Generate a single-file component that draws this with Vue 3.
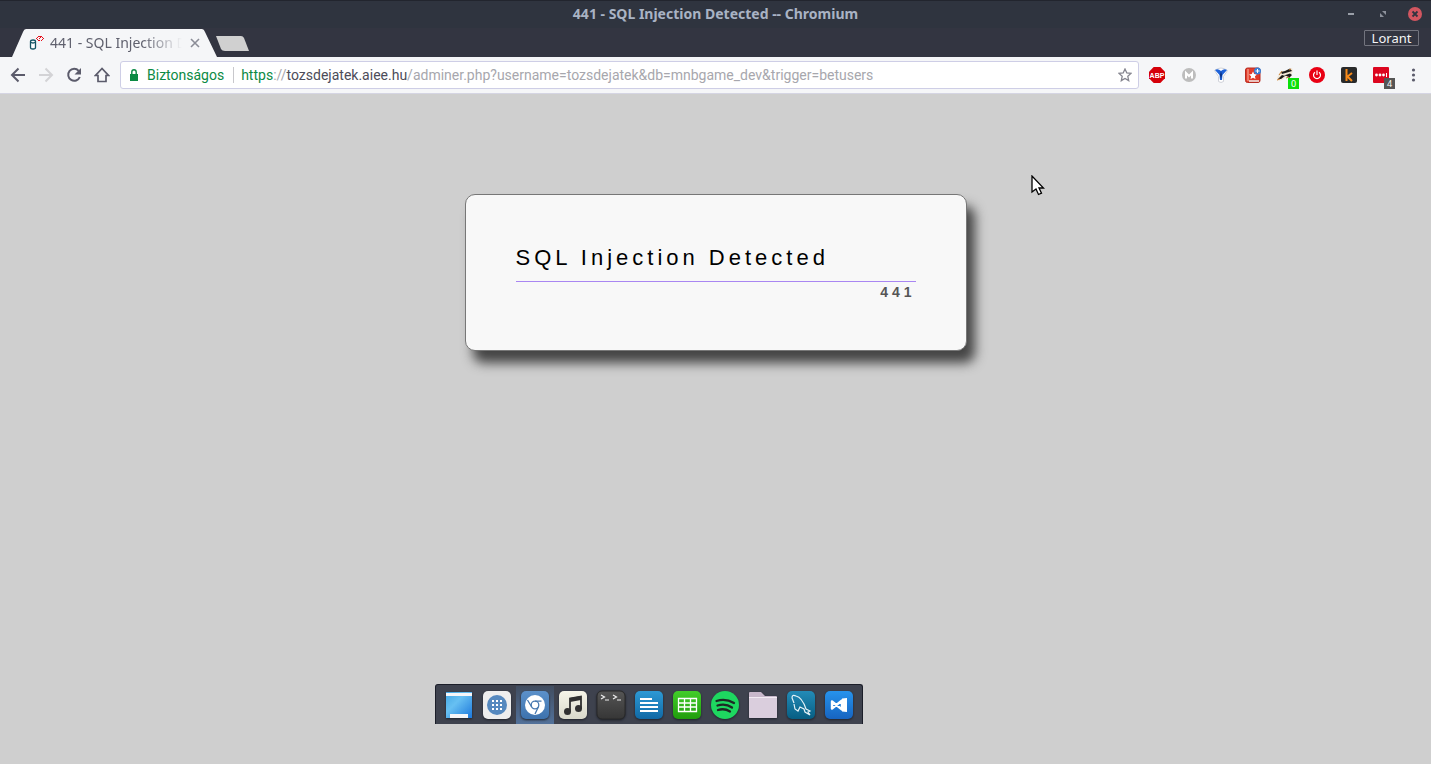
<script setup>
const page = {
  title: '441 - SQL Injection Detected',
  message: 'SQL Injection Detected',
  code: '441',
}
</script>

<template>
  <div class="desktop">
    <header class="titlebar">
      <h1>{{ page.title }} -- Chromium</h1>
      <div class="window-controls">
        <button type="button" aria-label="Minimize">
          <svg width="14" height="14" viewBox="0 0 14 14"><path d="M4 7h6" stroke="#9a9fa8" stroke-width="2" /></svg>
        </button>
        <button type="button" aria-label="Restore">
          <svg width="14" height="14" viewBox="0 0 14 14"><path d="M6 4h4v4zM4 6v4h4z" fill="#8d919b" /></svg>
        </button>
        <button type="button" aria-label="Close">
          <svg width="14" height="14" viewBox="0 0 14 14"><circle cx="7" cy="7" r="7" fill="#d25660" /><path d="m4.500 4.500 5 5m0-5-5 5" stroke="#303440" stroke-width="1.800" /></svg>
        </button>
      </div>
    </header>

    <div class="tabstrip">
      <div class="tab">
        <svg class="tab-shape" width="206" height="28" viewBox="0 0 206 28"><path d="M0 28 11 3Q12 0 14 0H190Q192 0 193 3L205 28z" fill="#f5f6f8" /></svg>
        <svg class="favicon" width="16" height="16" viewBox="0 0 16 16">
          <path d="M2.500 6.500Q2.500 5 5 5t2.500 1.500v6Q7.500 14 5 14t-2.500-1.500zM2.500 7Q5 9 7.500 7" fill="#fff" stroke="#145363" stroke-width="1.300" />
          <path d="M10 1h1v1h-1zM9 2h1v1H9zM8 3h1v1H8zM9 4h1v1H9zM10 5h1v1h-1zM11 1h2v1h-2zM12 2h1v1h-1zM11 3h1v1h-1zM11 5h1v1h-1zM13 1h1v1h-1zM14 2h1v1h-1zM15 3h1v1h-1zM14 4h1v1h-1zM13 5h1v1h-1z" fill="#e5101c" />
        </svg>
        <span class="tab-title">{{ page.title }}</span>
        <button type="button" class="tab-close" aria-label="Close tab">
          <svg width="10" height="10" viewBox="0 0 10 10"><path d="m1 1 8 8m0-8-8 8" stroke="#8b8d97" stroke-width="1.600" /></svg>
        </button>
      </div>
      <button type="button" class="new-tab" aria-label="New tab">
        <svg width="33" height="15" viewBox="0 0 33 15"><path d="M0 0h25q2 0 3 2l5 13H9q-3 0-4-2z" fill="#d0d0d0" /></svg>
      </button>
      <button type="button" class="profile">Lorant</button>
    </div>

    <nav class="toolbar">
      <div class="navigation">
        <button type="button" aria-label="Back">
          <svg width="16" height="16" viewBox="0 0 16 16"><path d="M15 8H2m6.500-6.500L2 8l6.500 6.500" fill="none" stroke="#5b5b6b" stroke-width="2" /></svg>
        </button>
        <button type="button" aria-label="Forward">
          <svg width="16" height="16" viewBox="0 0 16 16"><path d="M1 8h13M7.500 1.500 14 8l-6.500 6.500" fill="none" stroke="#d3d3d6" stroke-width="2" /></svg>
        </button>
        <button type="button" aria-label="Reload">
          <svg width="16" height="16" viewBox="0 0 16 16"><path d="M12.700 3.800A6 6 0 1 0 13.800 10" fill="none" stroke="#5b5b6b" stroke-width="2" /><path d="M15 1v6.500H8.500z" fill="#5b5b6b" /></svg>
        </button>
        <button type="button" aria-label="Home">
          <svg width="16" height="16" viewBox="0 0 16 16"><path d="M8 1.500 1.500 8.500H4v6h8v-6h2.500z" fill="none" stroke="#5b5b6b" stroke-width="1.700" /></svg>
        </button>
      </div>

      <div class="address">
        <svg width="8" height="12" viewBox="0 0 8 12"><path d="M0 5h8v7H0z" fill="#0b8a44" /><path d="M1.800 5V3a2.200 2.200 0 0 1 4.400 0v2" fill="none" stroke="#0b8a44" stroke-width="1.400" /></svg>
        <span class="secure">Biztonságos</span>
        <span class="divider"></span>
        <a class="url" href="#"><span class="scheme">https</span>://<span class="host">tozsdejatek.aiee.hu</span>/adminer.php?username=tozsdejatek&amp;db=mnbgame_dev&amp;trigger=betusers</a>
        <button type="button" class="bookmark" aria-label="Bookmark">
          <svg width="14" height="14" viewBox="0 0 14 14"><path d="m7 1 1.800 4 4.200.4-3.200 2.900.9 4.300L7 10.400l-3.700 2.200.9-4.300L1 5.400 5.200 5z" fill="none" stroke="#85858f" stroke-width="1.300" /></svg>
        </button>
      </div>

      <div class="extensions">
        <button type="button" aria-label="Ad blocker">
          <svg width="16" height="16" viewBox="0 0 16 16"><path d="M4.700 0h6.600L16 4.700v6.600L11.300 16H4.700L0 11.300V4.700z" fill="#d50009" /><text x="8" y="11" text-anchor="middle" class="abp">ABP</text></svg>
        </button>
        <button type="button" aria-label="Mail">
          <svg width="16" height="16" viewBox="0 0 16 16"><circle cx="8" cy="8" r="7" fill="#bdbdbd" /><path d="M5 11.500V6l3 3 3-3v5.500" fill="none" stroke="#fff" stroke-width="2" /></svg>
        </button>
        <button type="button" aria-label="Filter">
          <svg width="16" height="16" viewBox="0 0 16 16"><path d="M1.500 3.500q6.500-5 13 0l-4 6v5q-2.500 2-5 0v-5z" fill="#fff" stroke="#d0d3da" /><path d="M2 3q3-2 6 1 3-3 6-1l-4.500 5L9 13H7l-.5-5z" fill="#1e62d8" /><path d="m8 4 1 4-1 4-1-4z" fill="#0a2f80" /></svg>
        </button>
        <button type="button" aria-label="Dictionary">
          <svg width="16" height="16" viewBox="0 0 16 16"><rect x=".5" y="1" width="14.500" height="14.500" rx="2" fill="#e23c2b" stroke="#b72c22" /><path d="M3 2v12" stroke="#f7b9a8" /><path d="M4 14h10" stroke="#eee" stroke-width="1.500" /><path d="m8 4.500 1.200 2.600 2.800.3-2.100 1.900.6 2.800L8 10.700l-2.500 1.400.6-2.800L4 7.400l2.800-.3z" fill="#fff" /><circle cx="12.500" cy="4" r="3.500" fill="#397ed4" /><path d="M12.500 2v4m-2-2h4" stroke="#fff" /></svg>
        </button>
        <button type="button" aria-label="Privacy">
          <svg width="16" height="16" viewBox="0 0 16 16"><path d="m0 11 3-6 7-2 5-2 1 3-3 7-4-1-4 3-5 1z" fill="#f2e8d8" /><path d="m4 5 4-1 5-2.500L15 4l-3 1-7 2zM7 8.500l6-2L15 8l-3 3-2-2zM1 12l4-4 3 1-4 3z" fill="#1c1a18" /><path d="m2 8 3-4m7-1 2-1M9 11l3-1M0 13l3-1" stroke="#c9843f" /></svg>
          <span class="badge green">0</span>
        </button>
        <button type="button" aria-label="Power">
          <svg width="16" height="16" viewBox="0 0 16 16"><circle cx="8" cy="8" r="8" fill="#e90014" /><path d="M6 5.200a3.500 3.500 0 1 0 4 0M8 3.500V8" fill="none" stroke="#fff" stroke-width="1.200" /></svg>
        </button>
        <button type="button" aria-label="Keepass">
          <svg width="16" height="16" viewBox="0 0 16 16"><rect width="16" height="16" rx="2" fill="#292a2b" /><path d="M5.500 2v12m5.500-8L6.500 9.500 11 14" fill="none" stroke="#f78a19" stroke-width="2" /></svg>
        </button>
        <button type="button" aria-label="Passwords">
          <svg width="16" height="16" viewBox="0 0 16 16"><rect width="16" height="16" rx="1" fill="#dc061f" /><g fill="#fff"><circle cx="3.500" cy="8" r="1.400" /><circle cx="7" cy="8" r="1.400" /><circle cx="10.500" cy="8" r="1.400" /><path d="M13 6h1v4h-1z" /></g></svg>
          <span class="badge dark">4</span>
        </button>
        <button type="button" aria-label="Menu">
          <svg width="16" height="16" viewBox="0 0 16 16"><g fill="#5b5b6b"><circle cx="8.500" cy="3" r="1.600" /><circle cx="8.500" cy="8" r="1.600" /><circle cx="8.500" cy="13" r="1.600" /></g></svg>
        </button>
      </div>
    </nav>

    <main class="viewport">
      <section class="notice">
        <h2>{{ page.message }}</h2>
        <p>{{ page.code }}</p>
      </section>
    </main>

    <svg class="pointer" width="14" height="22" viewBox="0 0 14 22"><path d="M1 1v16l4-3 2.500 5.500 3-1.300L8 13h4.500z" fill="#fff" stroke="#000" stroke-width="1.300" /></svg>

    <nav class="dock" aria-label="Applications">
      <svg width="0" height="0" class="defs">
        <defs>
          <linearGradient id="screen" x1="0" y1="0" x2="1" y2="1"><stop stop-color="#42a6e4" /><stop offset=".4" stop-color="#67c0f2" /><stop offset="1" stop-color="#1d78dc" /></linearGradient>
          <linearGradient id="blue" x2="0" y2="1"><stop stop-color="#5c91ca" /><stop offset="1" stop-color="#3d72ad" /></linearGradient>
          <linearGradient id="cream" x2="0" y2="1"><stop stop-color="#f6f5e9" /><stop offset="1" stop-color="#d9d9cb" /></linearGradient>
          <linearGradient id="dark" x2="0" y2="1"><stop stop-color="#555" /><stop offset="1" stop-color="#363636" /></linearGradient>
          <linearGradient id="doc" x2="0" y2="1"><stop stop-color="#2d99d5" /><stop offset="1" stop-color="#1169a5" /></linearGradient>
          <linearGradient id="green" x2="0" y2="1"><stop stop-color="#42cd2a" /><stop offset="1" stop-color="#209d0c" /></linearGradient>
          <linearGradient id="sea" x2="0" y2="1"><stop stop-color="#238bb7" /><stop offset="1" stop-color="#075e83" /></linearGradient>
          <linearGradient id="code" x2="0" y2="1"><stop stop-color="#2693ed" /><stop offset="1" stop-color="#1764c0" /></linearGradient>
        </defs>
      </svg>
      <button type="button" aria-label="Desktop">
        <svg width="30" height="30" viewBox="0 0 30 30"><path d="M2 2h26v26H2z" fill="url(#screen)" /><path d="M2 3h26v3H2zM6 24h18v4H6z" fill="#f6f6f8" /></svg>
      </button>
      <button type="button" aria-label="Launcher">
        <svg width="30" height="30" viewBox="0 0 30 30"><rect x="1" y="1" width="28" height="28" rx="5" fill="#eee" /><circle cx="15" cy="15" r="10" fill="#5689bf" /><g fill="#fff"><path d="M10 10h2v2h-2zM14 10h2v2h-2zM18 10h2v2h-2zM10 14h2v2h-2zM14 14h2v2h-2zM18 14h2v2h-2zM10 18h2v2h-2zM14 18h2v2h-2zM18 18h2v2h-2z" /></g></svg>
      </button>
      <button type="button" class="active" aria-label="Chromium">
        <svg width="30" height="30" viewBox="0 0 30 30"><rect x="1" y="1" width="28" height="28" rx="5" fill="url(#blue)" /><circle cx="15" cy="15" r="10" fill="#fff" /><circle cx="15" cy="15" r="3.800" fill="none" stroke="#4778af" stroke-width="1.300" /><path d="M15 11.200h6.500M11.700 17 7.500 10m10.800 7L15 24" stroke="#4778af" stroke-width="1.300" /></svg>
      </button>
      <button type="button" aria-label="Music">
        <svg width="30" height="30" viewBox="0 0 30 30"><rect x="1" y="1" width="28" height="28" rx="5" fill="url(#cream)" /><path d="M12 21V8.500l11-2v12" fill="none" stroke="#303030" stroke-width="1.800" /><path d="m12 8 11-2v4l-11 2z" fill="#303030" /><circle cx="9.500" cy="21.500" r="3.500" fill="#303030" /><circle cx="20.500" cy="18.500" r="3.500" fill="#303030" /></svg>
      </button>
      <button type="button" aria-label="Terminal">
        <svg width="30" height="30" viewBox="0 0 30 30"><rect x="1" y="1" width="28" height="28" rx="5" fill="url(#dark)" stroke="#282828" /><path d="m5 5 3.500 2L5 9m4 1h4m4-5 3.500 2L17 9m4 1h4" fill="none" stroke="#eee" stroke-width="1.200" /></svg>
      </button>
      <button type="button" aria-label="Documents">
        <svg width="30" height="30" viewBox="0 0 30 30"><rect x="1" y="1" width="28" height="28" rx="5" fill="url(#doc)" /><path d="M6 9h12M6 13h18M6 17h18M6 21h18" stroke="#fff" stroke-width="2" /></svg>
      </button>
      <button type="button" aria-label="Spreadsheet">
        <svg width="30" height="30" viewBox="0 0 30 30"><rect x="1" y="1" width="28" height="28" rx="5" fill="url(#green)" /><path d="M6.500 8.500h18v13h-18zM6.500 13h18m-18 4h18m-12-8.500v13m6-13v13" fill="none" stroke="#fff" stroke-width="1.300" /></svg>
      </button>
      <button type="button" aria-label="Spotify">
        <svg width="30" height="30" viewBox="0 0 30 30"><circle cx="15" cy="15" r="14" fill="#1ed760" /><path d="M6.500 11q9-3 17.500 2M7.500 15.500q8-2.500 14.500 2M8 20q6.500-2 12 1.500" fill="none" stroke="#1e2824" stroke-width="2.300" stroke-linecap="round" /></svg>
      </button>
      <button type="button" aria-label="Files">
        <svg width="30" height="30" viewBox="0 0 30 30"><path d="M1 3q0-1 1-1h11l4 4h11q1 0 1 1v20q0 1-1 1H2q-1 0-1-1z" fill="#c8b8cb" /><path d="M1 8h28v19q0 1-1 1H2q-1 0-1-1z" fill="#dacedd" /><path d="M1 7.500h28" stroke="#f2ebf3" /></svg>
      </button>
      <button type="button" aria-label="MySQL Workbench">
        <svg width="30" height="30" viewBox="0 0 30 30"><rect x="1" y="1" width="28" height="28" rx="5" fill="url(#sea)" /><path d="M8 13 6 8q0-4 4-2c5 1 8 7 10 13l4 2-2 1 2 3-5-3-1-3-4-2-2 4-3-2-1-5" fill="none" stroke="#e6f3f8" stroke-width="1.200" /></svg>
      </button>
      <button type="button" aria-label="Code editor">
        <svg width="30" height="30" viewBox="0 0 30 30"><rect x="1" y="1" width="28" height="28" rx="5" fill="url(#code)" /><path d="m8 11.500 10 8v-9L8 18.500z" fill="none" stroke="#fff" stroke-width="2.400" stroke-linejoin="round" /><path d="m18 8.500 5-.5v14l-5-.5z" fill="#fff" /></svg>
      </button>
    </nav>
  </div>
</template>

<style>
html, body, #app { height: 100%; }
body { margin: 0; }
</style>

<style scoped>
* { box-sizing: border-box; }
.desktop {
  position: relative;
  display: flex;
  flex-direction: column;
  min-height: 100%;
  background: #cfcfcf;
  font-family: "Noto Sans", "Open Sans", sans-serif;
}
button {
  display: flex;
  padding: 0;
  border: 0;
  background: none;
  font: inherit;
}
svg { display: block; flex: none; }
h1, h2, p { margin: 0; }

.titlebar {
  display: grid;
  grid-template-columns: 1fr auto 1fr;
  align-items: center;
  height: 28px;
  padding: 0 9px;
  background: #2f343f;
  box-shadow: inset 0 1px #22252e;
}
.titlebar h1 {
  grid-column: 2;
  color: #a9b3c4;
  font-size: 14px;
  line-height: 20px;
  font-weight: 700;
}
.window-controls { display: flex; justify-content: flex-end; gap: 18px; }

.tabstrip {
  display: flex;
  height: 29px;
  padding: 1px 12px 0;
  background: #333541;
}
.tab {
  position: relative;
  display: flex;
  align-items: center;
  width: 204px;
  padding: 0 16px;
}
.tab-shape { position: absolute; left: 0; top: 0; }
.favicon { position: relative; }
.tab-title {
  position: relative;
  flex: 1;
  margin: 0 8px 0 6px;
  overflow: hidden;
  white-space: nowrap;
  color: #5f606d;
  font-size: 14px;
  line-height: 20px;
  mask-image: linear-gradient(to right, #000 70%, transparent);
}
.tab-close { position: relative; }
.new-tab { align-items: center; }
.profile {
  align-items: center;
  justify-content: center;
  align-self: flex-start;
  width: 55px;
  height: 16px;
  margin: 1px 0 0 auto;
  border: 1px solid #73747e;
  border-radius: 1px;
  color: #f5f5f7;
  font-size: 13px;
  line-height: 16px;
}

.toolbar {
  display: flex;
  align-items: center;
  gap: 10px;
  height: 37px;
  padding: 0 10px;
  background: #f5f6f8;
  border-bottom: 1px solid #d5d5e3;
}
.navigation { display: flex; gap: 12px; }
.address {
  display: flex;
  flex: 1;
  align-items: center;
  min-width: 0;
  height: 28px;
  padding: 0 6px 0 9px;
  border: 1px solid #cecee6;
  border-radius: 3px;
  background: #fff;
  font-family: Roboto, "Noto Sans", sans-serif;
  font-size: 14px;
  line-height: 20px;
  white-space: nowrap;
}
.secure, .scheme { color: #0b8a44; }
.secure { margin: 0 9px; }
.divider { width: 1px; height: 16px; background: #c8c8cc; }
.url {
  flex: 1;
  padding-left: 7px;
  color: #a7a7ad;
  text-decoration: none;
}
.host { color: #4c4c59; }
.extensions { display: flex; gap: 16px; }
.extensions button { position: relative; }
.abp { fill: #fff; font: 700 7px "Liberation Sans", sans-serif; }
.badge {
  position: absolute;
  left: 11px;
  top: 11px;
  width: 11px;
  height: 11px;
  color: #fff;
  font: 9px/11px "Noto Sans", sans-serif;
  text-align: center;
}
.green { background: #0be00b; }
.dark { background: #555; }

.viewport { flex: 1; padding: 100px 16px; }
.notice {
  max-width: 502px;
  margin: 0 auto;
  padding: 48px 50px;
  border: 1px solid #777;
  border-radius: 10px;
  background: #f8f8f8;
  box-shadow: 8px 12px 12px #444;
  font-family: "Liberation Sans", Arial, sans-serif;
  letter-spacing: 4px;
}
.notice h2 {
  padding-bottom: 8px;
  border-bottom: 1px solid #a986f2;
  color: #000;
  font-size: 22px;
  line-height: 30px;
  font-weight: 400;
}
.notice p {
  color: #555;
  font-size: 14px;
  line-height: 20px;
  font-weight: 700;
  text-align: right;
}
.pointer { position: absolute; left: 1031px; top: 175px; }

.dock {
  position: absolute;
  left: 0;
  right: 133px;
  bottom: 40px;
  display: flex;
  width: 428px;
  height: 40px;
  margin: 0 auto;
  padding: 1px 4px 0;
  border: 1px solid #1b1e29;
  border-bottom: 0;
  border-radius: 3px 3px 0 0;
  background: #3e424e;
}
.dock button {
  width: 38px;
  height: 38px;
  align-items: center;
  justify-content: center;
}
.dock button svg { filter: drop-shadow(0 1px 1px #20232c); }
.dock .active { background: linear-gradient(#414d60, #52719a); }
.defs { position: absolute; }
</style>
